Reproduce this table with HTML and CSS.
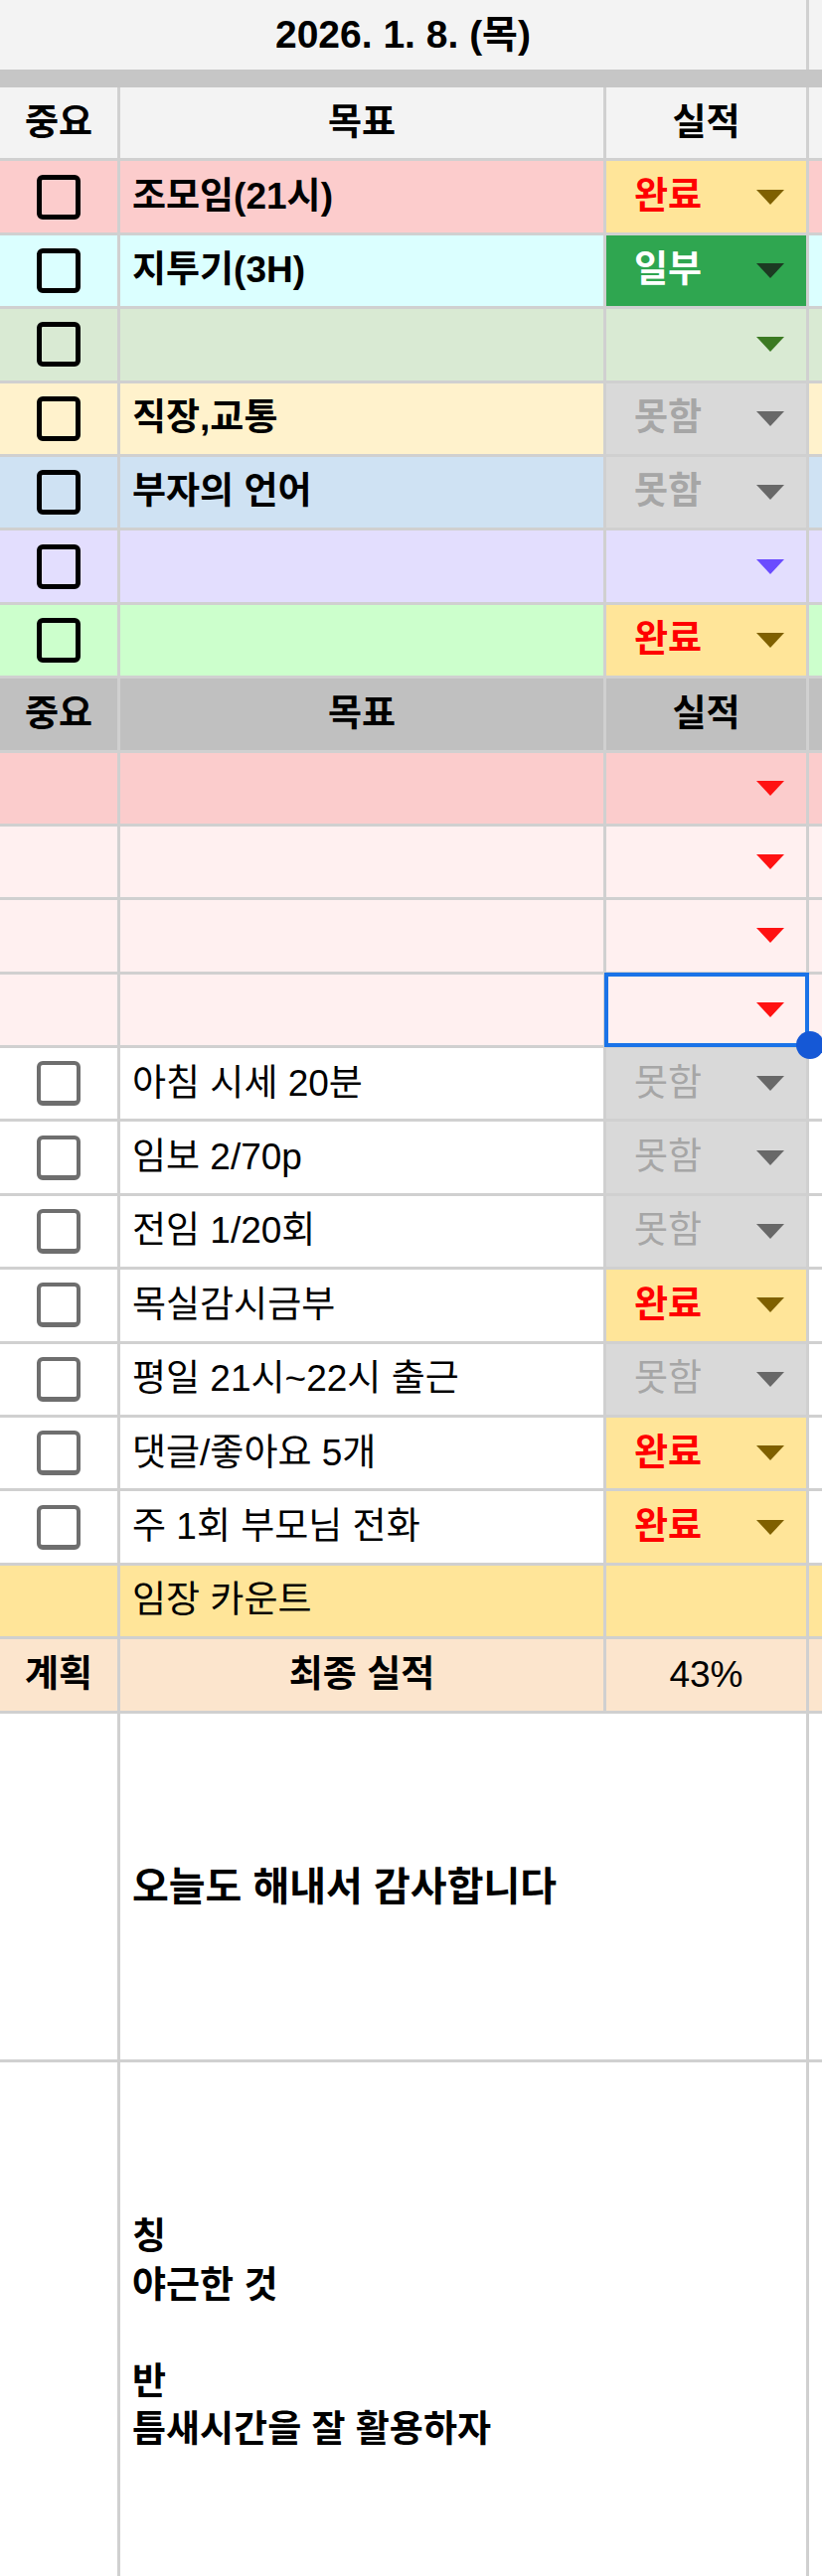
FILE: index.html
```html
<!DOCTYPE html>
<html lang="ko">
<head>
<meta charset="utf-8">
<title>2026. 1. 8. (목)</title>
<link rel="stylesheet" href="styles.css">
</head>
<body>
<div class="sheet">
  <div class="title-row">
    <div class="cell title">2026. 1. 8. (목)</div>
    <div class="cell"></div>
  </div>
  <div class="freeze"></div>
  <div class="table">
    <div class="row head">
      <div class="cell c">중요</div><div class="cell c">목표</div><div class="cell c">실적</div><div class="cell"></div>
    </div>

    <div class="row bold bg-pink">
      <div class="cell c"><span class="box"></span></div>
      <div class="cell t">조모임(21시)</div>
      <div class="cell chip done"><span>완료</span><svg class="arrow" viewBox="0 0 28 15"><path d="M0 0H28L14 15Z"/></svg></div>
      <div class="cell"></div>
    </div>
    <div class="row bold bg-cyan">
      <div class="cell c"><span class="box"></span></div>
      <div class="cell t">지투기(3H)</div>
      <div class="cell chip part"><span>일부</span><svg class="arrow" viewBox="0 0 28 15"><path d="M0 0H28L14 15Z"/></svg></div>
      <div class="cell"></div>
    </div>
    <div class="row bold bg-green">
      <div class="cell c"><span class="box"></span></div>
      <div class="cell t"></div>
      <div class="cell chip a-green"><svg class="arrow" viewBox="0 0 28 15"><path d="M0 0H28L14 15Z"/></svg></div>
      <div class="cell"></div>
    </div>
    <div class="row bold bg-yellow">
      <div class="cell c"><span class="box"></span></div>
      <div class="cell t">직장,교통</div>
      <div class="cell chip fail"><span>못함</span><svg class="arrow" viewBox="0 0 28 15"><path d="M0 0H28L14 15Z"/></svg></div>
      <div class="cell"></div>
    </div>
    <div class="row bold bg-blue">
      <div class="cell c"><span class="box"></span></div>
      <div class="cell t">부자의 언어</div>
      <div class="cell chip fail"><span>못함</span><svg class="arrow" viewBox="0 0 28 15"><path d="M0 0H28L14 15Z"/></svg></div>
      <div class="cell"></div>
    </div>
    <div class="row bold bg-lav">
      <div class="cell c"><span class="box"></span></div>
      <div class="cell t"></div>
      <div class="cell chip a-violet"><svg class="arrow" viewBox="0 0 28 15"><path d="M0 0H28L14 15Z"/></svg></div>
      <div class="cell"></div>
    </div>
    <div class="row bold bg-mint">
      <div class="cell c"><span class="box"></span></div>
      <div class="cell t"></div>
      <div class="cell chip done"><span>완료</span><svg class="arrow" viewBox="0 0 28 15"><path d="M0 0H28L14 15Z"/></svg></div>
      <div class="cell"></div>
    </div>

    <div class="row head head2">
      <div class="cell c">중요</div><div class="cell c">목표</div><div class="cell c">실적</div><div class="cell"></div>
    </div>

    <div class="row bg-rose">
      <div class="cell"></div><div class="cell t"></div>
      <div class="cell chip a-red"><svg class="arrow" viewBox="0 0 28 15"><path d="M0 0H28L14 15Z"/></svg></div>
      <div class="cell"></div>
    </div>
    <div class="row bg-blush">
      <div class="cell"></div><div class="cell t"></div>
      <div class="cell chip a-red"><svg class="arrow" viewBox="0 0 28 15"><path d="M0 0H28L14 15Z"/></svg></div>
      <div class="cell"></div>
    </div>
    <div class="row bg-blush">
      <div class="cell"></div><div class="cell t"></div>
      <div class="cell chip a-red"><svg class="arrow" viewBox="0 0 28 15"><path d="M0 0H28L14 15Z"/></svg></div>
      <div class="cell"></div>
    </div>
    <div class="row bg-blush">
      <div class="cell"></div><div class="cell t"></div>
      <div class="cell chip a-red selected"><svg class="arrow" viewBox="0 0 28 15"><path d="M0 0H28L14 15Z"/></svg><div class="selection"><span class="handle"></span></div></div>
      <div class="cell"></div>
    </div>

    <div class="row">
      <div class="cell c"><span class="box light"></span></div>
      <div class="cell t">아침 시세 20분</div>
      <div class="cell chip fail normal"><span>못함</span><svg class="arrow" viewBox="0 0 28 15"><path d="M0 0H28L14 15Z"/></svg></div>
      <div class="cell"></div>
    </div>
    <div class="row">
      <div class="cell c"><span class="box light"></span></div>
      <div class="cell t">임보 2/70p</div>
      <div class="cell chip fail normal"><span>못함</span><svg class="arrow" viewBox="0 0 28 15"><path d="M0 0H28L14 15Z"/></svg></div>
      <div class="cell"></div>
    </div>
    <div class="row">
      <div class="cell c"><span class="box light"></span></div>
      <div class="cell t">전임 1/20회</div>
      <div class="cell chip fail normal"><span>못함</span><svg class="arrow" viewBox="0 0 28 15"><path d="M0 0H28L14 15Z"/></svg></div>
      <div class="cell"></div>
    </div>
    <div class="row">
      <div class="cell c"><span class="box light"></span></div>
      <div class="cell t">목실감시금부</div>
      <div class="cell chip done"><span>완료</span><svg class="arrow" viewBox="0 0 28 15"><path d="M0 0H28L14 15Z"/></svg></div>
      <div class="cell"></div>
    </div>
    <div class="row">
      <div class="cell c"><span class="box light"></span></div>
      <div class="cell t">평일 21시~22시 출근</div>
      <div class="cell chip fail normal"><span>못함</span><svg class="arrow" viewBox="0 0 28 15"><path d="M0 0H28L14 15Z"/></svg></div>
      <div class="cell"></div>
    </div>
    <div class="row">
      <div class="cell c"><span class="box light"></span></div>
      <div class="cell t">댓글/좋아요 5개</div>
      <div class="cell chip done"><span>완료</span><svg class="arrow" viewBox="0 0 28 15"><path d="M0 0H28L14 15Z"/></svg></div>
      <div class="cell"></div>
    </div>
    <div class="row">
      <div class="cell c"><span class="box light"></span></div>
      <div class="cell t">주 1회 부모님 전화</div>
      <div class="cell chip done"><span>완료</span><svg class="arrow" viewBox="0 0 28 15"><path d="M0 0H28L14 15Z"/></svg></div>
      <div class="cell"></div>
    </div>

    <div class="row bg-gold">
      <div class="cell"></div>
      <div class="cell t">임장 카운트</div>
      <div class="cell"></div>
      <div class="cell"></div>
    </div>
    <div class="row bg-peach">
      <div class="cell c b">계획</div>
      <div class="cell c b">최종 실적</div>
      <div class="cell c">43%</div>
      <div class="cell"></div>
    </div>

    <div class="row big-a">
      <div class="cell"></div>
      <div class="cell t wide b note-lg">오늘도 해내서 감사합니다</div>
      <div class="cell"></div>
    </div>
    <div class="row big-b">
      <div class="cell"></div>
      <div class="cell t wide b note">칭<br>야근한 것<br><br>반<br>틈새시간을 잘 활용하자</div>
      <div class="cell"></div>
    </div>
  </div>
</div>
</body>
</html>
```

FILE: styles.css
```css
* { box-sizing: border-box; }

html, body {
  margin: 0;
  padding: 0;
  background: #ffffff;
}

body {
  font-family: "Liberation Sans", "Noto Sans CJK KR", sans-serif;
  font-size: 37px;
  color: #000000;
  overflow: hidden;
}

.sheet {
  width: 827px;
}

.title-row,
.row {
  display: grid;
  grid-template-columns: 118px 486px 201px 1fr;
  column-gap: 3px;
  background: #d0d0d0;
}

.title-row {
  height: 70px;
}

.title-row .cell {
  background: #f3f3f3;
}

.title {
  grid-column: 1 / 4;
  font-weight: 700;
  font-size: 39px;
  justify-content: center;
}

.freeze {
  height: 18px;
  background: #c6c6c6;
}

.table {
  display: flex;
  flex-direction: column;
  row-gap: 3px;
  background: #d0d0d0;
}

.row {
  height: 71.4px;
}

.cell {
  display: flex;
  align-items: center;
  background: #ffffff;
  min-width: 0;
  white-space: nowrap;
  line-height: 1.2;
}

.cell.c { justify-content: center; }
.cell.t { padding-left: 12px; }
.b, .bold .cell, .head .cell { font-weight: 700; }

.head .cell { background: #f3f3f3; }
.head2 .cell { background: #c0c0c0; }

.bg-pink .cell   { background: #fccccc; }
.bg-cyan .cell   { background: #dbffff; }
.bg-green .cell  { background: #d9ead3; }
.bg-yellow .cell { background: #fff2cc; }
.bg-blue .cell   { background: #cfe2f3; }
.bg-lav .cell    { background: #e3defe; }
.bg-mint .cell   { background: #ccffcc; }
.bg-rose .cell   { background: #fbcccc; }
.bg-blush .cell  { background: #fff0f0; }
.bg-gold .cell   { background: #ffe599; }
.bg-peach .cell  { background: #fce5cd; }

/* checkbox */
.box {
  display: block;
  width: 44px;
  height: 45px;
  border: 5px solid #000000;
  border-radius: 6px;
  background: transparent;
}

.box.light {
  border: 4px solid #6e6e6e;
  border-bottom-width: 5px;
}

/* dropdown chips */
.chip {
  position: relative;
  padding: 0 22px 0 28px;
  font-weight: 700;
}

.chip .arrow {
  width: 28px;
  height: 15px;
  margin-left: auto;
  fill: currentColor;
  flex: none;
}

.row .chip.done { background: #ffe599; color: #ff0000; }
.row .chip.done .arrow { fill: #7f6000; }

.row .chip.part { background: #2fa650; color: #ffffff; }
.row .chip.part .arrow { fill: #1c3a22; }

.row .chip.fail { background: #d9d9d9; color: #a6a6a6; }
.row .chip.fail .arrow { fill: #686868; }
.chip.normal { font-weight: 400; }

.chip.a-green .arrow { fill: #3b7a22; }
.chip.a-violet .arrow { fill: #6a4cff; }
.chip.a-red .arrow { fill: #ff1212; }

/* selection overlay */
.selection {
  position: absolute;
  top: -2px;
  right: -3px;
  bottom: -2px;
  left: -2px;
  border: 4px solid #1a73e8;
  z-index: 2;
}

.handle {
  position: absolute;
  width: 28px;
  height: 28px;
  right: -19px;
  bottom: -16px;
  border-radius: 50%;
  background: #1558d6;
}

/* big note rows */
.big-a { height: 348.7px; }
.big-b { height: 546px; }

.wide { grid-column: 2 / 4; }

.note-lg { font-size: 40px; }
.note { line-height: 48.5px; }
```
